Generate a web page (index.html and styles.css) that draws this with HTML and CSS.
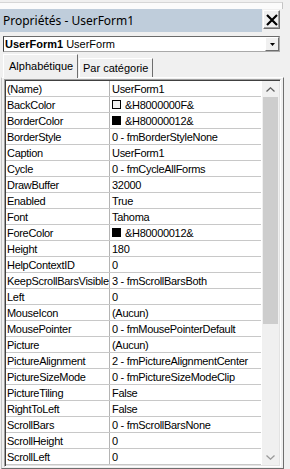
FILE: index.html
```html
<!DOCTYPE html>
<html>
<head>
<meta charset="utf-8">
<link rel="stylesheet" href="styles.css">
</head>
<body>
<div class="win">
  <div class="topstrip"><div class="topbox"></div></div>
  <div class="titlerow">
    <div class="titlebar">Propriétés - UserForm1</div>
    <div class="closebtn"><svg width="12" height="12" viewBox="0 0 12 12"><path d="M1 1L11 11M11 1L1 11" stroke="#000" stroke-width="2.2"/></svg></div>
  </div>
  <div class="combo">
    <div class="combotext"><b>UserForm1</b> UserForm</div>
    <div class="combobtn"><svg width="5" height="3" viewBox="0 0 5 3"><path d="M0 0H5L2.5 3Z" fill="#000"/></svg></div>
  </div>
  <div class="tabs">
    <div class="tab active">Alphabétique</div>
    <div class="tab">Par catégorie</div>
  </div>
  <div class="page">
    <div class="grid">
      <div class="rows">
        <div class="row"><div class="name">(Name)</div><div class="val">UserForm1</div></div>
        <div class="row"><div class="name">BackColor</div><div class="val"><span class="sw sw-face"></span>&amp;H8000000F&amp;</div></div>
        <div class="row"><div class="name">BorderColor</div><div class="val"><span class="sw sw-black"></span>&amp;H80000012&amp;</div></div>
        <div class="row"><div class="name">BorderStyle</div><div class="val">0 - fmBorderStyleNone</div></div>
        <div class="row"><div class="name">Caption</div><div class="val">UserForm1</div></div>
        <div class="row"><div class="name">Cycle</div><div class="val">0 - fmCycleAllForms</div></div>
        <div class="row"><div class="name">DrawBuffer</div><div class="val">32000</div></div>
        <div class="row"><div class="name">Enabled</div><div class="val">True</div></div>
        <div class="row"><div class="name">Font</div><div class="val">Tahoma</div></div>
        <div class="row"><div class="name">ForeColor</div><div class="val"><span class="sw sw-black"></span>&amp;H80000012&amp;</div></div>
        <div class="row"><div class="name">Height</div><div class="val">180</div></div>
        <div class="row"><div class="name">HelpContextID</div><div class="val">0</div></div>
        <div class="row"><div class="name">KeepScrollBarsVisible</div><div class="val">3 - fmScrollBarsBoth</div></div>
        <div class="row"><div class="name">Left</div><div class="val">0</div></div>
        <div class="row"><div class="name">MouseIcon</div><div class="val">(Aucun)</div></div>
        <div class="row"><div class="name">MousePointer</div><div class="val">0 - fmMousePointerDefault</div></div>
        <div class="row"><div class="name">Picture</div><div class="val">(Aucun)</div></div>
        <div class="row"><div class="name">PictureAlignment</div><div class="val">2 - fmPictureAlignmentCenter</div></div>
        <div class="row"><div class="name">PictureSizeMode</div><div class="val">0 - fmPictureSizeModeClip</div></div>
        <div class="row"><div class="name">PictureTiling</div><div class="val">False</div></div>
        <div class="row"><div class="name">RightToLeft</div><div class="val">False</div></div>
        <div class="row"><div class="name">ScrollBars</div><div class="val">0 - fmScrollBarsNone</div></div>
        <div class="row"><div class="name">ScrollHeight</div><div class="val">0</div></div>
        <div class="row"><div class="name">ScrollLeft</div><div class="val">0</div></div>
      </div>
      <div class="scroll">
        <div class="arrow up"><svg width="9" height="5" viewBox="0 0 9 5"><path d="M0.5 4.5L4.5 0.8L8.5 4.5" fill="none" stroke="#606060" stroke-width="1.3"/></svg></div>
        <div class="track">
          <div class="thumb"></div>
        </div>
        <div class="arrow down"><svg width="9" height="5" viewBox="0 0 9 5"><path d="M0.5 0.5L4.5 4.2L8.5 0.5" fill="none" stroke="#9a9a9a" stroke-width="1.3"/></svg></div>
      </div>
    </div>
  </div>
</div>
</body>
</html>
```
FILE: styles.css
```css
* { box-sizing: border-box; }
html, body { margin: 0; padding: 0; }
body {
  width: 290px;
  height: 469px;
  overflow: hidden;
  background: #f0f0f0;
  font-family: "Liberation Sans", Arial, sans-serif;
  font-size: 11px;
  color: #000;
}
.win { width: 290px; height: 469px; }

.topstrip { height: 9px; padding-top: 2px; }
.topbox {
  width: 283px;
  height: 7px;
  background: #fbfbfb;
  border-top: 1px solid #d6d6d6;
  border-right: 1px solid #c4c4c4;
}

.titlerow { display: flex; height: 23px; }
.titlebar {
  width: 262px;
  height: 23px;
  background: #bfcddb;
  font-family: "Noto Sans", sans-serif;
  font-size: 12px;
  line-height: 23px;
  padding-left: 3px;
  white-space: nowrap;
}
.closebtn {
  margin-left: 1px;
  margin-top: 1px;
  width: 17px;
  height: 19px;
  background: #f0f0f0;
  border-top: 1px solid #fff;
  border-left: 1px solid #fff;
  border-right: 1px solid #6e6e6e;
  border-bottom: 1px solid #6e6e6e;
  box-shadow: inset -1px -1px 0 #a0a0a0;
  display: flex;
  align-items: center;
  justify-content: center;
}

.combo {
  margin: 4px 0 0 3px;
  width: 277px;
  height: 16px;
  background: #fff;
  border-top: 1px solid #6b6b6b;
  border-left: 1px solid #3c3c3c;
  border-right: 1px solid #a9a9a9;
  border-bottom: 1px solid #a9a9a9;
  display: flex;
  align-items: center;
}
.combotext { flex: 1; padding-left: 1px; white-space: nowrap; line-height: 14px; }
.combotext b { font-weight: bold; }
.combobtn {
  width: 14px;
  height: 14px;
  background: #f0f0f0;
  border-top: 1px solid #fff;
  border-left: 1px solid #fff;
  border-right: 1px solid #6e6e6e;
  border-bottom: 1px solid #6e6e6e;
  display: flex;
  align-items: center;
  justify-content: center;
}

.tabs {
  margin-top: 1px;
  height: 24px;
  display: flex;
  align-items: flex-end;
  padding-left: 3px;
}
.tab {
  height: 19px;
  width: 74px;
  border-top: 1px solid #fff;
  border-left: 1px solid #fff;
  border-right: 1px solid #6e6e6e;
  padding-left: 3px;
  line-height: 18px;
  white-space: nowrap;
  margin-left: 1px;
}
.tab.active {
  height: 24px;
  width: 75px;
  margin-left: 0;
  padding-left: 5px;
  line-height: 22px;
  position: relative;
  z-index: 1;
  margin-bottom: -1px;
  background: #f0f0f0;
}

.page {
  margin-left: 1px;
  width: 283px;
  height: 392px;
  border-top: 1px solid #fff;
  border-left: 1px solid #c6c6c6;
  border-right: 1px solid #6e6e6e;
  border-bottom: 1px solid #6e6e6e;
  padding: 1px 2px 1px 2px;
}
.grid {
  display: flex;
  height: 388px;
  border-top: 1px solid #a0a0a0;
  border-left: 1px solid #a0a0a0;
  border-right: 1px solid #fff;
  border-bottom: 1px solid #fff;
  box-shadow: inset 1px 1px 0 #404040, inset -1px -1px 0 #e3e3e3;
  padding: 1px;
  background: #fff;
  letter-spacing: -0.3px;
}
.rows { width: 255px; }
.row {
  display: flex;
  height: 16px;
  border-bottom: 1px solid #c8c8c8;
}
.name {
  width: 104px;
  border-right: 1px solid #b4b4b4;
  padding-left: 1px;
  line-height: 16px;
  white-space: nowrap;
  overflow: hidden;
}
.val {
  flex: 1;
  padding-left: 2px;
  line-height: 16px;
  white-space: nowrap;
  overflow: hidden;
  display: flex;
  align-items: center;
}
.sw {
  display: inline-block;
  flex: none;
  width: 9px;
  height: 9px;
  margin-right: 4px;
  border: 1px solid #000;
}
.sw-face { background: #f0f0f0; }
.sw-black { background: #000; }

.scroll {
  width: 17px;
  margin-left: 1px;
  background: #f0f0f0;
  display: flex;
  flex-direction: column;
}
.arrow {
  height: 16px;
  display: flex;
  align-items: center;
  justify-content: center;
}
.track { flex: 1; padding: 0 1px; }
.thumb {
  height: 227px;
  background: #cdcdcd;
}
```
